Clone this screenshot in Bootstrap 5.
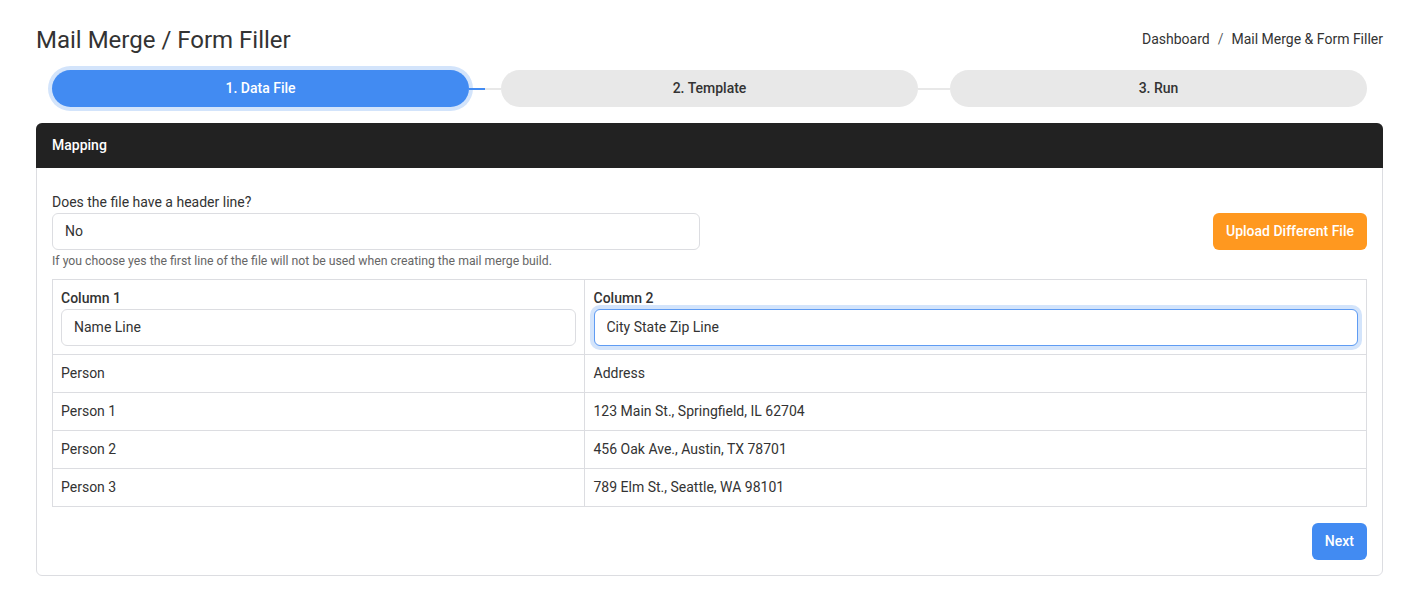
<!DOCTYPE html>
<html lang="en">
<head>
  <meta charset="UTF-8">
  <meta name="viewport" content="width=device-width, initial-scale=1.0">
  <title>Mail Merge / Form Filler</title>
  <link href="https://cdn.jsdelivr.net/npm/bootstrap@5.3.0/dist/css/bootstrap.min.css" rel="stylesheet">
  <style>
    body {
      font-family: Roboto, "Liberation Sans", sans-serif;
      font-size: 14px;
      color: #333;
      background: #fff;
    }
    .page-wrap { padding: 24px 35px 0 36px; }
    .page-title { font-size: 24px; font-weight: 400; line-height: 32px; margin: 0; color: #333; }
    .crumbs { font-size: 14px; margin: 0 0 2px; }
    .crumbs .breadcrumb-item a { color: #333; text-decoration: none; }
    .crumbs .breadcrumb-item.active { color: #333; }

    /* step wizard */
    .steps { padding: 0 16px; margin-top: 14px; height: 37px; }
    .step-pill {
      flex: 1 1 0;
      height: 37px;
      border-radius: 18.5px;
      background: #e8e8e8;
      color: #333;
      font-weight: 500;
    }
    .step-pill.on { background: #428bf2; color: #fff; box-shadow: 0 0 0 4px #d3e4fb; }
    .step-link { width: 32px; height: 2px; background: #e8e8e8; }
    .step-link.on { background: linear-gradient(to right, #428bf2 50%, #e8e8e8 50%); }

    .map-card { margin-top: 16px; border-color: #dcdde1; border-radius: 6px; height: 453px; }
    .map-card .card-header {
      background: #222;
      color: #fff;
      font-weight: 500;
      height: 45px;
      line-height: 45px;
      padding: 0 16px;
      border: 0;
      margin: -1px -1px 0;
      border-radius: 6px 6px 0 0;
    }
    .map-card .card-body { padding: 26px 15px 15px; }
    .field-wrap { width: 648px; }
    .field-label { display: block; line-height: 16px; margin-bottom: 3px; }
    .form-control.tall {
      height: 37px;
      font-size: 14px;
      padding: 0 12px 2px;
      color: #333;
      border-color: #dcdde1;
      border-radius: 6px;
    }
    .form-control.tall.focused, .form-control.tall:focus {
      border-color: #5f9cf3;
      box-shadow: 0 0 0 4px #d3e4fb;
    }
    .help-line { font-size: 12.25px; color: #666; line-height: 14px; margin-top: 4px; margin-bottom: 11px; }
    .btn-up, .btn-up:hover { background: #ff981f; color: #fff; }
    .btn-nx, .btn-nx:hover { background: #428bf2; color: #fff; }
    .btn-up, .btn-nx { height: 37px; font-size: 14px; font-weight: 500; padding: 0 13px; border: 0; border-radius: 6px; }
    .up-slot { padding-top: 19px; }
    .map-table { margin: 0; table-layout: fixed; border-color: #dcdde1; color: #333; }
    .map-table td, .map-table th { padding: 0 8px; height: 38px; font-size: 14px; color: #333; vertical-align: middle; box-shadow: none; }
    .map-table th { height: 75px; padding: 10px 8px 8px; font-weight: 500; }
    .map-table th span { display: block; line-height: 16px; margin-bottom: 3px; }
    .map-table tr > :last-child { padding-left: 8.5px; }
    .col-first { width: 532px; }
  </style>
</head>
<body>
  <div class="page-wrap">
    <div class="d-flex justify-content-between align-items-center">
      <h1 class="page-title">Mail Merge / Form Filler</h1>
      <nav aria-label="breadcrumb">
        <ol class="breadcrumb crumbs">
          <li class="breadcrumb-item"><a href="#">Dashboard</a></li>
          <li class="breadcrumb-item active" aria-current="page">Mail Merge &amp; Form Filler</li>
        </ol>
      </nav>
    </div>

    <div class="steps d-flex align-items-center">
      <div class="step-pill on d-flex align-items-center justify-content-center">1. Data File</div>
      <div class="step-link on"></div>
      <div class="step-pill d-flex align-items-center justify-content-center">2. Template</div>
      <div class="step-link"></div>
      <div class="step-pill d-flex align-items-center justify-content-center">3. Run</div>
    </div>

    <div class="card map-card">
      <div class="card-header">Mapping</div>
      <div class="card-body">
        <div class="d-flex justify-content-between align-items-start">
          <div class="field-wrap">
            <label class="field-label" for="hasHeader">Does the file have a header line?</label>
            <input id="hasHeader" class="form-control tall" type="text" value="No" readonly>
            <div class="help-line">If you choose yes the first line of the file will not be used when creating the mail merge build.</div>
          </div>
          <div class="up-slot">
            <button type="button" class="btn btn-up">Upload Different File</button>
          </div>
        </div>

        <table class="table table-bordered map-table">
          <thead>
            <tr>
              <th class="col-first"><span>Column 1</span><input class="form-control tall" type="text" value="Name Line" readonly></th>
              <th><span>Column 2</span><input class="form-control tall focused" type="text" value="City State Zip Line" readonly></th>
            </tr>
          </thead>
          <tbody>
            <tr><td>Person</td><td>Address</td></tr>
            <tr><td>Person 1</td><td>123 Main St., Springfield, IL 62704</td></tr>
            <tr><td>Person 2</td><td>456 Oak Ave., Austin, TX 78701</td></tr>
            <tr><td>Person 3</td><td>789 Elm St., Seattle, WA 98101</td></tr>
          </tbody>
        </table>

        <div class="d-flex justify-content-end mt-3">
          <button type="button" class="btn btn-nx">Next</button>
        </div>
      </div>
    </div>
  </div>

  <script src="https://cdn.jsdelivr.net/npm/bootstrap@5.3.0/dist/js/bootstrap.bundle.min.js"></script>
</body>
</html>
